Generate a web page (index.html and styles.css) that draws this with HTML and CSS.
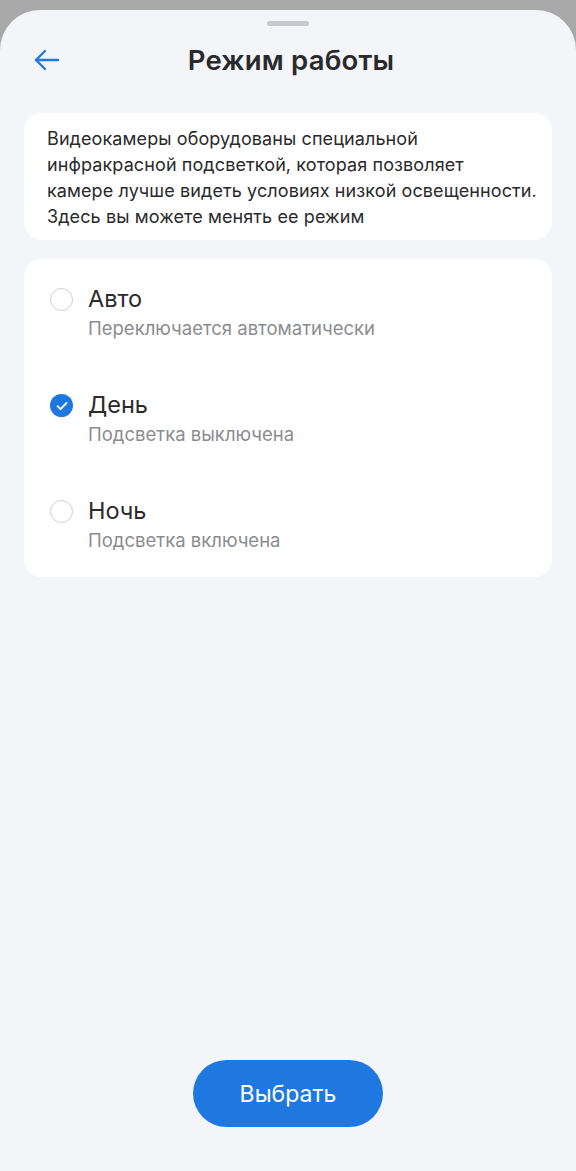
FILE: index.html
```html
<!DOCTYPE html>
<html lang="ru">
<head>
    <meta charset="UTF-8">
    <meta name="viewport" content="width=device-width, initial-scale=1.0">
    <title>Режим работы</title>
    <link rel="stylesheet" href="styles.css">
</head>
<body>
    <div class="sheet">
        <div class="handle"></div>
        <div class="header">
            <button class="back-btn" type="button" aria-label="Назад">
                <svg width="28" height="28" viewBox="0 0 28 28" fill="none" stroke="#1f78e0" stroke-width="2.4" stroke-linecap="round" stroke-linejoin="round">
                    <path d="M25 14H3"/>
                    <path d="M12 5l-9 9 9 9"/>
                </svg>
            </button>
            <h1>Режим работы</h1>
        </div>

        <div class="card info">
            Видеокамеры оборудованы специальной<br>
            инфракрасной подсветкой, которая позволяет<br>
            камере лучше видеть условиях низкой освещенности.<br>
            Здесь вы можете менять ее режим
        </div>

        <div class="card options">
            <label class="option">
                <span class="radio"></span>
                <span class="option-text">
                    <span class="option-title">Авто</span>
                    <span class="option-sub">Переключается автоматически</span>
                </span>
            </label>
            <label class="option">
                <span class="radio checked">
                    <svg width="14" height="14" viewBox="0 0 14 14" fill="none" stroke="#fff" stroke-width="1.8" stroke-linecap="round" stroke-linejoin="round">
                        <path d="M2.5 7.2l3 3 6-6.2"/>
                    </svg>
                </span>
                <span class="option-text">
                    <span class="option-title">День</span>
                    <span class="option-sub">Подсветка выключена</span>
                </span>
            </label>
            <label class="option">
                <span class="radio"></span>
                <span class="option-text">
                    <span class="option-title">Ночь</span>
                    <span class="option-sub">Подсветка включена</span>
                </span>
            </label>
        </div>

        <div class="footer">
            <button class="select-btn" type="button">Выбрать</button>
        </div>
    </div>
</body>
</html>
```

FILE: styles.css
```css
body {
    margin: 0;
    background-color: #a9a9aa;
    font-family: Inter, "Noto Sans", sans-serif;
    color: #2a2a2c;
}
.sheet {
    margin-top: 10px;
    min-height: 1161px;
    box-sizing: border-box;
    background-color: #f4f5f9;
    border-radius: 40px 40px 0 0;
    display: flex;
    flex-direction: column;
    padding: 0 24px 44px;
}
.handle {
    width: 42px;
    height: 5px;
    border-radius: 3px;
    background-color: #c8c9ce;
    margin: 11px auto 0;
}
.header {
    position: relative;
    height: 60px;
    display: flex;
    align-items: center;
    justify-content: center;
    margin-top: 4px;
    margin-bottom: 23px;
    padding-left: 6px;
}
.header h1 {
    margin: 0;
    font-size: 27.5px;
    font-weight: 600;
    color: #2a2a2c;
    letter-spacing: 0.2px;
}
.back-btn {
    position: absolute;
    left: 9px;
    top: 16px;
    padding: 0;
    border: none;
    background: none;
    display: flex;
}
.card {
    background-color: #fff;
    border-radius: 18px;
}
.info {
    padding: 13px 12px 10px 23px;
    font-size: 18px;
    line-height: 26px;
    letter-spacing: 0.1px;
    white-space: nowrap;
    color: #2a2a2c;
}
.options {
    margin-top: 19px;
    padding: 14px 26px 25px;
    display: flex;
    flex-direction: column;
}
.option {
    display: flex;
    align-items: flex-start;
    gap: 15px;
    height: 106px;
}
.option:last-child {
    height: auto;
}
.radio {
    width: 23px;
    height: 23px;
    box-sizing: border-box;
    border: 1.5px solid #cfd0d4;
    border-radius: 50%;
    margin-top: 15px;
    display: flex;
    align-items: center;
    justify-content: center;
}
.radio.checked {
    border: none;
    background-color: #1f78e0;
}
.option-text {
    display: flex;
    flex-direction: column;
}
.option-title {
    font-size: 23.5px;
    line-height: 28px;
    margin-top: 12px;
    color: #2a2a2c;
}
.option-sub {
    font-size: 18.5px;
    line-height: 24px;
    margin-top: 3px;
    color: #8b8c90;
}
.footer {
    margin-top: auto;
    display: flex;
    justify-content: center;
}
.select-btn {
    width: 190px;
    height: 67px;
    border: none;
    border-radius: 34px;
    background-color: #1f78e0;
    color: #fff;
    font-family: Inter, "Noto Sans", sans-serif;
    font-size: 23px;
    cursor: pointer;
}
```
